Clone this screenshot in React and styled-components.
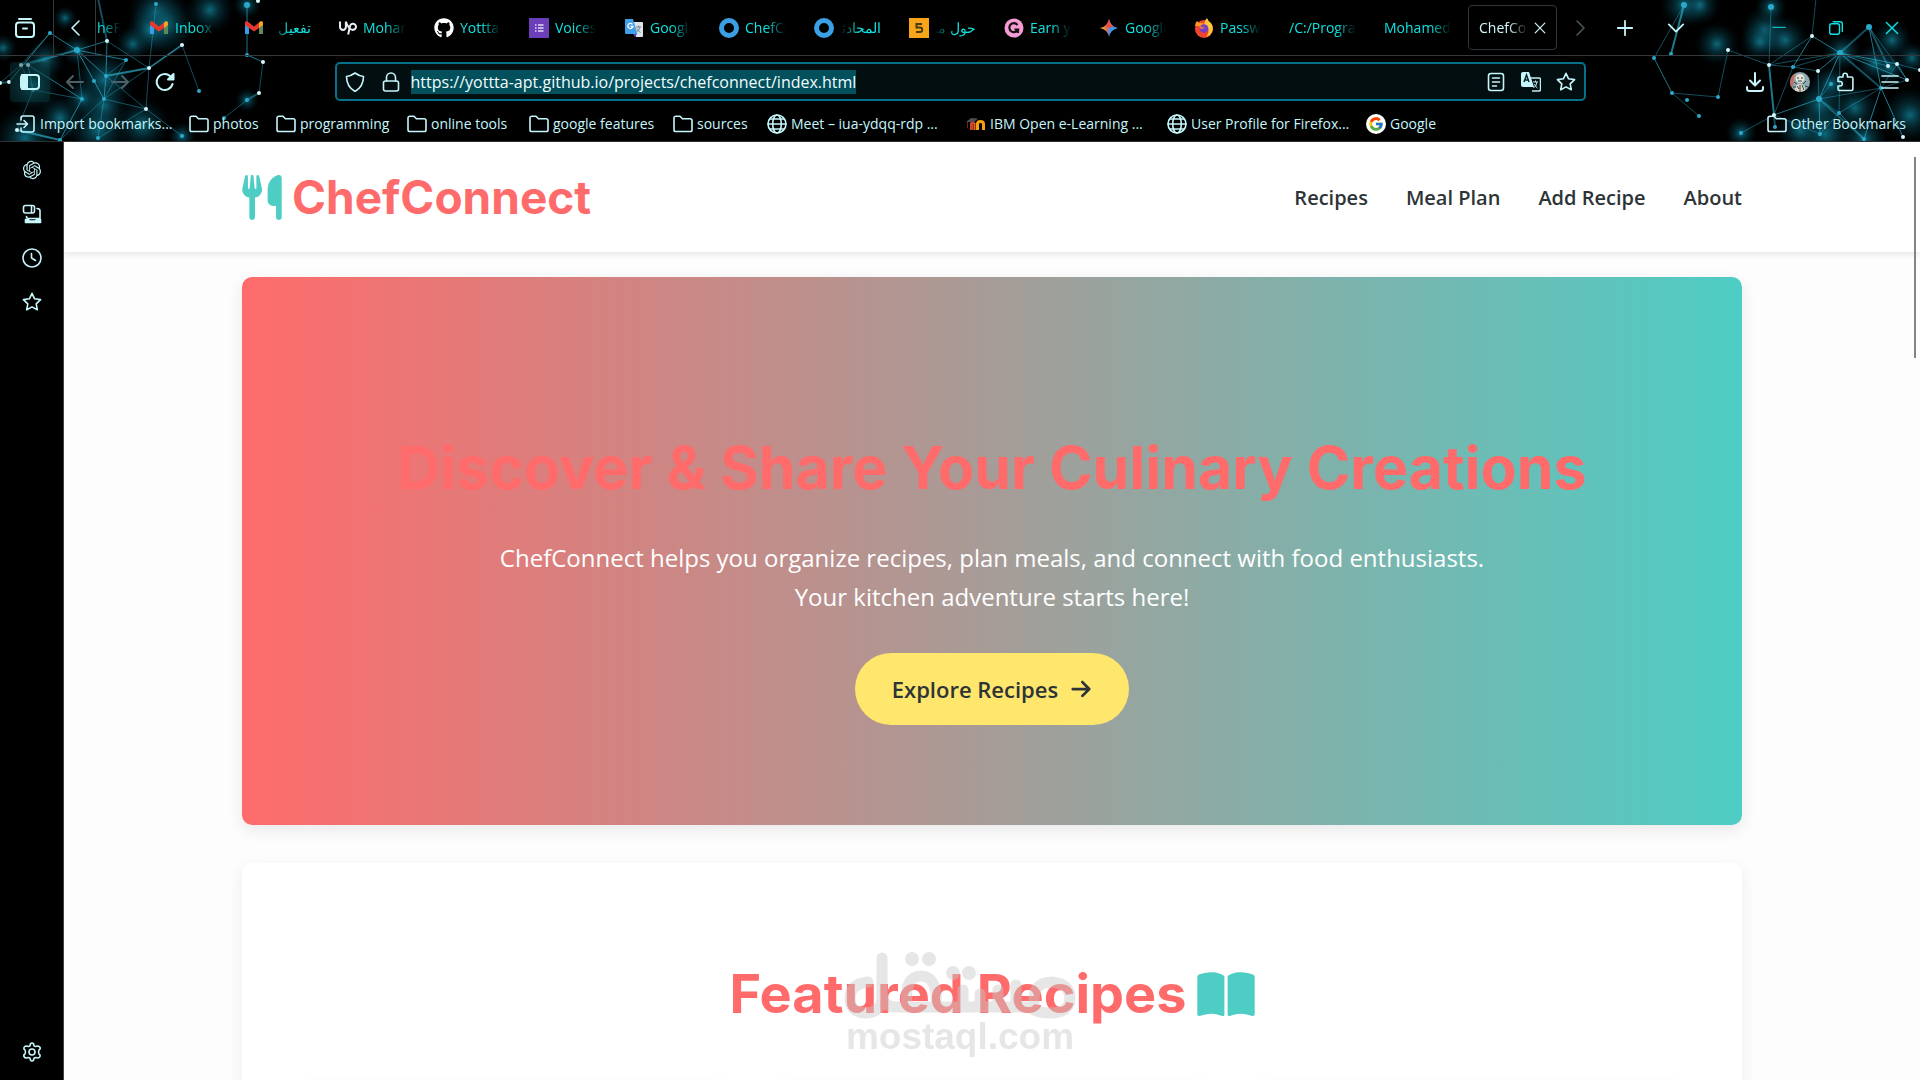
import React from "react";
import styled, { createGlobalStyle, css } from "styled-components";
import { FaUtensils, FaBookOpen, FaArrowRight, FaGithub } from "react-icons/fa6";
import { SiUpwork } from "react-icons/si";
import { FcGoogle } from "react-icons/fc";
import { RiOpenaiFill } from "react-icons/ri";

const GlobalStyle = createGlobalStyle`
  * {
    box-sizing: border-box;
    margin: 0;
    padding: 0;
  }
  body {
    background: #000;
    font-family: "Open Sans", "Noto Sans", sans-serif;
    color: #2d3436;
  }
  button {
    border: 0;
    background: none;
    font: inherit;
    color: inherit;
    cursor: pointer;
  }
  a {
    color: inherit;
    text-decoration: none;
  }
  svg {
    display: block;
    flex: none;
  }
`;

/* ---------- theme drawing behind the toolbars ---------- */

const leftNet = {
  nodes: [
    [77, 50, 3], [107, 41, 1], [182, 45, 1], [149, 68, 1], [126, 60, 2], [50, 33, 2],
    [21, 65, 1], [28, 65, 1], [9, 82, 1], [0, 83, 1], [106, 76, 2], [94, 81, 2],
    [82, 99, 2], [104, 99, 2], [146, 109, 1], [33, 90, 2], [98, 138, 2], [60, 140, 2],
    [182, 136, 2], [199, 91, 2], [247, 55, 2], [263, 62, 1], [259, 93, 1], [247, 100, 2],
    [156, 4, 2], [247, 5, 3], [258, 1, 1], [224, 118, 2], [17, 130, 1], [98, -2, 2],
  ],
  lines: [
    [0, 1], [0, 6], [0, 7], [0, 5], [0, 13], [0, 11], [0, 10], [0, 12], [1, 29], [1, 10],
    [1, 3], [4, 10], [3, 2], [3, 14], [3, 13], [3, 10], [14, 13], [14, 10], [10, 13],
    [2, 19], [22, 21], [20, 21], [22, 23], [23, 27], [25, 20], [24, 3], [5, 6],
    [5, 8], [6, 9], [8, 9], [7, 15], [15, 12], [13, 16], [12, 17], [14, 18], [15, 28],
    [28, 17], [16, 14], [11, 13], [7, 12], [13, 17], [4, 13], [0, 4], [2, 3], [6, 15],
  ],
  glow: [
    [133, 44, 9], [77, 50, 8], [156, 12, 14], [165, 25, 16], [210, 10, 12], [3, 48, 7],
    [104, 80, 16], [104, 106, 12], [82, 99, 9], [60, 118, 12], [25, 138, 16], [98, 130, 16],
    [33, 85, 14], [45, 60, 10], [247, 5, 7], [182, 136, 7], [247, 100, 6], [142, 125, 14],
    [150, 30, 12], [65, 18, 6],
  ],
};

const rightNet = {
  nodes: [
    [1840, 53, 3], [1812, 36, 1], [1728, 50, 1], [1769, 65, 1], [1793, 67, 2], [1869, 27, 3],
    [1888, 66, 1], [1897, 64, 1], [1907, 80, 1], [1881, 88, 2], [1818, 71, 1], [1831, 84, 2],
    [1819, 99, 3], [1839, 113, 2], [1774, 115, 1], [1775, 127, 2], [1864, 139, 2], [1820, 134, 2],
    [1741, 133, 2], [1718, 97, 2], [1671, 54, 2], [1654, 58, 2], [1672, 93, 2], [1699, 116, 2],
    [1684, 5, 3], [1771, 7, 3], [1687, 100, 2], [1903, 137, 1], [1920, 70, 1], [1816, -2, 1],
  ],
  lines: [
    [0, 1], [0, 5], [0, 6], [0, 7], [0, 3], [0, 4], [0, 12], [0, 13], [0, 9], [0, 10],
    [1, 3], [1, 29], [1, 4], [3, 4], [3, 2], [3, 14], [4, 10], [10, 12], [12, 14], [12, 13],
    [12, 9], [12, 17], [14, 15], [9, 13], [9, 27], [9, 8], [9, 7], [8, 7], [7, 28], [5, 6],
    [5, 9], [2, 19], [19, 22], [21, 22], [22, 23], [21, 24], [20, 24], [25, 3], [13, 17],
    [13, 16], [14, 18], [17, 14], [16, 9], [12, 16], [4, 14], [0, 8], [5, 8], [11, 12],
  ],
  glow: [
    [1765, 30, 12], [1785, 40, 12], [1760, 42, 10], [1717, 44, 11], [1842, 52, 10], [1875, 63, 10],
    [1820, 105, 14], [1831, 84, 10], [1855, 108, 12], [1825, 134, 16], [1741, 133, 8], [1684, 5, 12],
    [1771, 7, 8], [1892, 40, 10], [1912, 58, 8], [1864, 139, 12], [1800, 130, 12], [1890, 68, 8],
    [1910, 115, 14], [1700, 5, 10],
  ],
};

const NetSvg = styled.svg`
  position: absolute;
  inset: 0;
  pointer-events: none;
`;

const Net = ({ nodes, lines, glow }) => (
  <g>
    {glow.map(([x, y, r], i) => (
      <circle key={i} cx={x} cy={y} r={r * 2} fill="url(#glow)" />
    ))}
    {lines.map(([a, b], i) => (
      <line
        key={i}
        x1={nodes[a][0]}
        y1={nodes[a][1]}
        x2={nodes[b][0]}
        y2={nodes[b][1]}
        stroke="#2babc8"
        strokeWidth={i % 7 === 1 ? 2 : 1}
        opacity={i % 3 === 0 ? 0.7 : 0.45}
      />
    ))}
    {nodes.map(([x, y, kind], i) => (
      <circle key={i} cx={x} cy={y} r={kind === 3 ? 3 : 2} fill={kind === 1 ? "#d8f6fb" : "#2aa9cc"} />
    ))}
  </g>
);

const Network = () => (
  <NetSvg width="1920" height="141" aria-hidden="true">
    <defs>
      <radialGradient id="glow">
        <stop offset="0" stopColor="#1593ad" stopOpacity="0.7" />
        <stop offset="0.4" stopColor="#0b6478" stopOpacity="0.4" />
        <stop offset="1" stopColor="#06303c" stopOpacity="0" />
      </radialGradient>
    </defs>
    <Net {...leftNet} />
    <Net {...rightNet} />
  </NetSvg>
);

/* ---------- browser icons ---------- */

const Line = ({ size = 20, width = 2, children }) => (
  <svg
    width={size}
    height={size}
    viewBox="0 0 20 20"
    fill="none"
    stroke="currentColor"
    strokeWidth={width}
    strokeLinecap="round"
    strokeLinejoin="round"
    aria-hidden="true"
  >
    {children}
  </svg>
);

const starPath = "M10 1.3l2.6 5.5 6 .8-4.4 4.2 1.1 6L10 14.9l-5.3 2.9 1.1-6L1.4 7.6l6-.8z";

const FolderIcon = () => (
  <Line width={1.6}>
    <path d="M1 15.5V4A1.8 1.8 0 0 1 2.8 2.2H7l2.400 2.500h7.800A1.800 1.800 0 0 1 19 6.500v9.200A1.800 1.800 0 0 1 17.200 17.500H2.800A1.800 1.800 0 0 1 1 15.700z" />
  </Line>
);

const GlobeIcon = () => (
  <Line width={1.6}>
    <circle cx="10" cy="10" r="9" />
    <ellipse cx="10" cy="10" rx="4.300" ry="9" />
    <path d="M1 10h18M3 5h14M3 15h14" />
  </Line>
);

const GmailIcon = () => (
  <svg width="20" height="20" viewBox="0 0 20 20">
    <path d="M1 5v11h4V8z" fill="#3b9de8" />
    <path d="M15 8v8h4V5z" fill="#5f8a5a" />
    <path d="M15 4.500l2-1.500q2 0 2 2v2l-4 3z" fill="#f5a623" />
    <path d="M1 7V5q0-2 2-2l7 5.500L15 4.500V10l-5 3.500L5 10z" fill="#e8372c" />
  </svg>
);

const VoicesIcon = () => (
  <svg width="20" height="20" viewBox="0 0 20 20">
    <path fill="#6b3fb8" d="M0 0h20v20H0z" />
    <path d="M6 7h1.500M6 10h1.500M6 13h1.500M9 7h5.500M9 10h5.500M9 13h5.500" stroke="#e6dcf5" strokeWidth="1.500" />
  </svg>
);

const TranslateIcon = () => (
  <svg width="20" height="20" viewBox="0 0 20 20">
    <path d="M7 4h11q1 0 1 1v13q0 1-1 1h-6z" fill="#dfe3e6" />
    <path d="M12 9h5M14.500 7.500V9M12.500 14q3-2 3.500-5M13 10.500q1 2.500 3.500 4" stroke="#73828c" fill="none" />
    <path d="M1 1h8l4.500 15H2q-1 0-1-1z" fill="#3f9fe9" />
    <path d="M9 16h4l-2 3z" fill="#5b3cc4" />
    <path d="M8.500 6.300A2.600 2.600 0 1 0 9 8.500H6.600" stroke="#fff" strokeWidth="1.300" fill="none" />
  </svg>
);

const RingIcon = () => (
  <svg width="20" height="20" viewBox="0 0 20 20">
    <circle cx="10" cy="10" r="7.500" fill="none" stroke="#3b9fe6" strokeWidth="5" />
  </svg>
);

const FiveIcon = () => (
  <svg width="20" height="20" viewBox="0 0 20 20">
    <path fill="#f9a51a" d="M0 0h20v20H0z" />
    <path d="M13 6H7.500v3.500H11q2.200 0 2.200 2.300T11 14H7" fill="none" stroke="#4a3a12" strokeWidth="2" />
  </svg>
);

const PinkIcon = () => (
  <svg width="20" height="20" viewBox="0 0 20 20">
    <circle cx="10" cy="10" r="9.500" fill="#f69bd6" />
    <path d="M13.500 7A4.500 4.500 0 1 0 14 11.500H10.500M14 10.500V15" fill="none" stroke="#17120f" strokeWidth="2.200" />
  </svg>
);

const GeminiIcon = () => (
  <svg width="20" height="20" viewBox="0 0 20 20">
    <defs>
      <linearGradient id="gem" x1="0" y1="0.500" x2="1" y2="0.500">
        <stop offset="0" stopColor="#f5c518" />
        <stop offset="0.350" stopColor="#e8713f" />
        <stop offset="0.550" stopColor="#3f93ee" />
        <stop offset="1" stopColor="#3fa0f0" />
      </linearGradient>
    </defs>
    <path d="M10 1q1.500 7.500 9 9-7.500 1.500-9 9-1.500-7.500-9-9 7.500-1.500 9-9z" fill="url(#gem)" />
    <path d="M10 1q1 5 4.500 7.500L10 10 6 8.200Q9 6 10 1z" fill="#e8513f" />
  </svg>
);

const FirefoxIcon = () => (
  <svg width="20" height="20" viewBox="0 0 20 20">
    <circle cx="10" cy="11" r="9" fill="#f2452f" />
    <path d="M11 3q1-2 2-3 1 3 4 5 3 4 1 9-2 4-6 5 4-5 2-9-1-3-4-3z" fill="#ffc83a" />
    <path d="M1 8q0-3 2-5l2 2q3-1 5 1L7 8z" fill="#ff9a1f" />
    <circle cx="10" cy="10.500" r="4.300" fill="#7a3fc9" />
    <path d="M5 8q2 0 3 1.500 2 0 3-1-1 2-3 2.500-2 0-3-3z" fill="#ff8a2a" />
  </svg>
);

const MoodleIcon = () => (
  <svg width="20" height="20" viewBox="0 0 20 20">
    <path d="M11.500 16V10q0-2.500 3-2.500T17.500 10v6" fill="none" stroke="#f9a012" strokeWidth="3" />
    <path d="M5.500 16V9.500q1-1.500 3-1.500" fill="none" stroke="#d8431e" strokeWidth="3" />
    <path d="M8.500 16V9" stroke="#f26a1b" strokeWidth="2" />
    <path d="M0 8l5-4 7 .5-4 3.500z" fill="#4c4f53" />
    <path d="M1.500 8v6" stroke="#5e2a22" strokeWidth="1" />
  </svg>
);

const GoogleBadge = styled.span`
  display: flex;
  flex: none;
  padding: 2px;
  border-radius: 50%;
  background: #fff;
`;

/* ---------- browser chrome ---------- */

const Window = styled.div`
  display: flex;
  flex-direction: column;
  height: 100vh;
  overflow: hidden;
  background: #000;
`;

const Chrome = styled.header`
  position: relative;
  flex: none;
  color: #c5f6fb;
  border-bottom: 1px solid #2c3336;
`;

const TabBar = styled.div`
  position: relative;
  display: flex;
  align-items: center;
  height: 56px;
  border-bottom: 1px solid #33393d;
  font-size: 14px;
`;

const IconButton = styled.button`
  display: flex;
  flex: none;
  align-items: center;
  justify-content: center;
  width: ${({ $w }) => $w || 40}px;
  height: 40px;
  border-radius: 4px;
  color: ${({ $color }) => $color || "inherit"};
  background: ${({ $active }) => ($active ? "rgba(10, 60, 64, 0.45)" : "none")};
`;

const ScrollButton = styled(IconButton)`
  height: 55px;
  margin-left: 3px;
  border-left: 1px solid #33393d;
  border-right: 1px solid #33393d;
  border-radius: 0;
`;

const Tabs = styled.div`
  display: flex;
  flex: none;
  gap: 6px;
  overflow: hidden;
`;

const fade = css`
  mask-image: linear-gradient(
    to ${({ $rtl }) => ($rtl ? "left" : "right")},
    #000 calc(100% - 20px),
    transparent
  );
`;

const TabButton = styled.button`
  display: flex;
  align-items: center;
  gap: 6px;
  width: ${({ $first }) => ($first ? 36 : 89)}px;
  height: 45px;
  padding: 0 10px 0 ${({ $first }) => ($first ? 0 : 10)}px;
  border: 1px solid ${({ $active }) => ($active ? "#30373b" : "transparent")};
  border-radius: 4px;
  color: ${({ $active }) => ($active ? "#d4f8fc" : "#0fe3e0")};
  background: ${({ $active }) => ($active ? "#000" : "none")};
  overflow: hidden;
`;

const TabLabel = styled.span`
  flex: 1;
  min-width: 0;
  overflow: hidden;
  white-space: nowrap;
  text-align: start;
  line-height: 24px;
  ${fade}
`;

const Spacer = styled.div`
  flex: 1;
`;

const WindowButtons = styled.div`
  display: flex;
  color: #10e0e6;
`;

const NavBar = styled.div`
  position: relative;
  display: flex;
  align-items: center;
  height: 51px;
  padding: 0 10px;
  justify-content: space-between;
`;

const Group = styled.div`
  display: flex;
  align-items: center;
  gap: ${({ $gap }) => $gap || 0}px;
`;

const UrlBar = styled.label`
  display: flex;
  align-items: center;
  gap: 10px;
  width: 66%;
  max-width: 1251px;
  height: 39px;
  padding: 0 8px;
  border: 2px solid #07708a;
  border-radius: 5px;
  background: #020e0f;
`;

const UrlInput = styled.input`
  field-sizing: content;
  height: 24px;
  border: 0;
  outline: 0;
  color: #f2fdfe;
  background: #02505c;
  font: 16px/24px "Open Sans", sans-serif;
`;

const Avatar = styled.svg`
  border-radius: 50%;
`;

const Bookmarks = styled.nav`
  position: relative;
  display: flex;
  align-items: center;
  height: 34px;
  padding: 0 14px 0 16px;
  font-size: 14px;
`;

const Bookmark = styled.a`
  display: flex;
  flex: none;
  align-items: center;
  gap: 4px;
  width: ${({ $w }) => ($w ? `${$w}px` : "auto")};
  white-space: nowrap;
  line-height: 24px;
`;

const tabs = [
  { label: "heFo", first: true },
  { label: "Inbox", icon: <GmailIcon /> },
  { label: "تفعيل", icon: <GmailIcon />, rtl: true },
  { label: "Moham", icon: <SiUpwork size={18} color="#e8eef0" /> },
  { label: "Yottta-a", icon: <FaGithub size={20} color="#fff" /> },
  { label: "Voices", icon: <VoicesIcon /> },
  { label: "Google", icon: <TranslateIcon /> },
  { label: "ChefCo", icon: <RingIcon /> },
  { label: "المحادثة", icon: <RingIcon />, rtl: true },
  { label: "حول مو", icon: <FiveIcon />, rtl: true },
  { label: "Earn yo", icon: <PinkIcon /> },
  { label: "Google", icon: <GeminiIcon /> },
  { label: "Passwo", icon: <FirefoxIcon /> },
  { label: "/C:/Progra" },
  { label: "Mohamed" },
];

const bookmarks = [
  { label: "photos", icon: <FolderIcon />, w: 87 },
  { label: "programming", icon: <FolderIcon />, w: 131 },
  { label: "online tools", icon: <FolderIcon />, w: 122 },
  { label: "google features", icon: <FolderIcon />, w: 144 },
  { label: "sources", icon: <FolderIcon />, w: 94 },
  { label: "Meet – iua-ydqq-rdp ...", icon: <GlobeIcon />, w: 199 },
  { label: "IBM Open e-Learning ...", icon: <MoodleIcon />, w: 201 },
  { label: "User Profile for Firefox...", icon: <GlobeIcon />, w: 199 },
  {
    label: "Google",
    icon: (
      <GoogleBadge>
        <FcGoogle size={16} />
      </GoogleBadge>
    ),
    w: 80,
  },
];

const BrowserChrome = () => (
  <Chrome>
    <Network />
    <TabBar>
      <IconButton $w={50} aria-label="Firefox View">
        <Line>
          <path d="M4 1h12" />
          <rect x="1" y="4.500" width="18" height="14.500" rx="3" />
          <path d="M8 10.500h4" />
        </Line>
      </IconButton>
      <ScrollButton $w={43} aria-label="Scroll tabs left">
        <Line width={1.6}>
          <path d="M14 3l-7 7 7 7" />
        </Line>
      </ScrollButton>
      <Tabs role="tablist">
        {tabs.map(({ label, icon, rtl, first }, i) => (
          <TabButton key={i} role="tab" $first={first}>
            {icon}
            <TabLabel $rtl={rtl} dir={rtl ? "rtl" : "ltr"}>
              {label}
            </TabLabel>
          </TabButton>
        ))}
        <TabButton role="tab" aria-selected="true" $active>
          <TabLabel>ChefCon</TabLabel>
          <Line size={12}>
            <path d="M2 2l16 16M18 2L2 18" />
          </Line>
        </TabButton>
      </Tabs>
      <IconButton $w={46} $color="#4d5559" aria-label="Scroll tabs right">
        <Line width={1.6}>
          <path d="M7 3l7 7-7 7" />
        </Line>
      </IconButton>
      <IconButton $w={44} aria-label="New tab">
        <Line size={18}>
          <path d="M10 2v16M2 10h16" />
        </Line>
      </IconButton>
      <IconButton $w={57} aria-label="List all tabs">
        <Line size={18}>
          <path d="M2 6l8 8 8-8" />
        </Line>
      </IconButton>
      <Spacer />
      <WindowButtons>
        <IconButton $w={57} aria-label="Minimize">
          <Line size={14} width={1.4}>
            <path d="M1 9h18" />
          </Line>
        </IconButton>
        <IconButton $w={57} aria-label="Restore">
          <Line size={14} width={2}>
            <rect x="1" y="4" width="14" height="15" rx="3" />
            <path d="M6 1h10q3 0 3 3v11" />
          </Line>
        </IconButton>
        <IconButton $w={56} aria-label="Close">
          <Line size={14}>
            <path d="M2 2l16 16M18 2L2 18" />
          </Line>
        </IconButton>
      </WindowButtons>
    </TabBar>

    <NavBar>
      <Group $gap={5}>
        <IconButton $active aria-label="Sidebars">
          <Line>
            <rect x="1" y="3" width="18" height="14" rx="3" />
            <path d="M2 3h5v14H2z" fill="currentColor" />
          </Line>
        </IconButton>
        <IconButton $color="#4d6068" aria-label="Back">
          <Line>
            <path d="M18 10H2M8 4l-6 6 6 6" />
          </Line>
        </IconButton>
        <IconButton $color="#4d6068" aria-label="Forward">
          <Line>
            <path d="M2 10h16M12 4l6 6-6 6" />
          </Line>
        </IconButton>
        <IconButton aria-label="Reload">
          <Line>
            <path d="M17.500 12A8 8 0 1 1 15 4l2.500 2.500" />
            <path d="M18.500 2v5.500H13z" fill="currentColor" />
          </Line>
        </IconButton>
      </Group>
      <UrlBar>
        <Group $gap={16}>
          <Line width={1.6}>
            <path d="M10 1q4 3 8.500 3.500 0 10-8.500 15-8.500-5-8.500-15Q6 4 10 1z" />
          </Line>
          <Line width={1.6}>
            <rect x="2.500" y="9" width="15" height="10" rx="2" />
            <path d="M5.500 9V5.500a4.500 4.500 0 0 1 9 0V9" />
          </Line>
        </Group>
        <UrlInput
          aria-label="Address"
          spellCheck={false}
          defaultValue="https://yottta-apt.github.io/projects/chefconnect/index.html"
        />
        <Spacer />
        <Group $gap={15}>
          <Line width={1.6}>
            <rect x="2.500" y="1.500" width="15" height="17" rx="2.500" />
            <path d="M6.500 6h7M6.500 10h7M6.500 14h4" />
          </Line>
          <svg width="20" height="20" viewBox="0 0 20 20" aria-hidden="true">
            <path d="M9 6h9q1.500 0 1.500 1.500v10q0 1.500-1.500 1.500h-7" fill="none" stroke="#bfeef5" strokeWidth="1.500" />
            <path d="M0 2q0-2 2-2h6l5 15H2q-2 0-2-2z" fill="#c5f6fb" />
            <path d="M3 10l2.500-7L8 10M4 8h3" fill="none" stroke="#0a2326" strokeWidth="1.500" />
            <path d="M12 10h5M14.500 8.500V10M12.500 16q3-2 3.500-6M13.500 12q1 3 3 4" fill="none" stroke="#bfeef5" />
          </svg>
          <Line width={1.6}>
            <path d={starPath} />
          </Line>
        </Group>
      </UrlBar>
      <Group $gap={5}>
        <IconButton aria-label="Downloads">
          <Line>
            <path d="M10 1v12M5 8.500l5 5 5-5M2 15v1.500Q2 19 4.500 19h11q2.500 0 2.500-2.500V15" />
          </Line>
        </IconButton>
        <IconButton aria-label="Account">
          <Avatar width="20" height="20" viewBox="0 0 20 20">
            <path fill="#8fa9b0" d="M0 0h20v20H0z" />
            <path d="M0 5l5-5-2 14-3 2z" fill="#c96a60" />
            <circle cx="10" cy="6.500" r="4.500" fill="#e6e2d4" />
            <path d="M5 20q-1-8 5-8t5 8z" fill="#e3d6c6" />
            <path d="M7 6h2M11 6h2M8 9h4M7 14l2 3M12 13l2 5M10 13v7M4 10l3 2M16 9l-3 3M3 15h3M15 14l3 1" stroke="#26454f" />
          </Avatar>
        </IconButton>
        <IconButton aria-label="Extensions">
          <Line width={1.6}>
            <path d="M3 6.500q0-1.500 1.500-1.500H8V3.500a2.200 2.200 0 0 1 4.400 0V5h4q1.500 0 1.500 1.500V17q0 1.500-1.500 1.500h-12Q3 18.500 3 17v-3h2a2 2 0 0 0 0-4.500H3z" />
          </Line>
        </IconButton>
        <IconButton aria-label="Menu">
          <Line width={1.6}>
            <path d="M2 4h16M2 10h16M2 16h16" />
          </Line>
        </IconButton>
      </Group>
    </NavBar>

    <Bookmarks aria-label="Bookmarks">
      <Bookmark href="#import" $w={173}>
        <Line width={1.6}>
          <path d="M5 6V4q0-2 2-2h9q2 0 2 2v12q0 2-2 2H7q-2 0-2-2v-2M1 10h10M8 6.500l3.500 3.500L8 13.500" />
        </Line>
        Import bookmarks...
      </Bookmark>
      {bookmarks.map(({ label, icon, w }) => (
        <Bookmark key={label} href="#bookmark" $w={w}>
          {icon}
          {label}
        </Bookmark>
      ))}
      <Spacer />
      <Bookmark href="#other">
        <FolderIcon />
        Other Bookmarks
      </Bookmark>
    </Bookmarks>
  </Chrome>
);

/* ---------- side strip ---------- */

const Body = styled.div`
  display: flex;
  flex: 1;
  min-height: 0;
`;

const SideBar = styled.aside`
  display: flex;
  flex: none;
  flex-direction: column;
  align-items: center;
  gap: 4px;
  width: 64px;
  padding: 8px 0;
  border-right: 1px solid #3b4246;
  color: #c5f6fb;
`;

const BrowserSide = () => (
  <SideBar>
    <IconButton aria-label="AI chatbot">
      <RiOpenaiFill size={22} />
    </IconButton>
    <IconButton aria-label="Synced tabs">
      <Line width={1.6}>
        <rect x="1.500" y="1.500" width="11" height="7.500" rx="2" />
        <path d="M9.500 2v6.500M15 4.500q3 0 3 2.500v7.500H6.500q-2 0-2-2" />
        <path d="M3.500 15.500h3q.5 1.500 2 1.500h4q1.500 0 2-1.500h4v3h-15z" fill="currentColor" />
      </Line>
    </IconButton>
    <IconButton aria-label="History">
      <Line width={1.6}>
        <circle cx="10" cy="10" r="9" />
        <path d="M9.500 5.500V10l4 2.500" />
      </Line>
    </IconButton>
    <IconButton aria-label="Bookmarks sidebar">
      <Line width={1.6}>
        <path d={starPath} />
      </Line>
    </IconButton>
    <Spacer />
    <IconButton aria-label="Customize sidebar">
      <Line width={1.6}>
        <circle cx="10" cy="10" r="3" />
        <path d="M8.300 3q0-2 1.700-2t1.700 2q.3 1.500 2 1.500l2-.5q1.500 0 2.300 1.500T17 8q-1 2 0 4 1.700 1 1 2.500T15.700 16l-2-.5q-1.700 0-2 1.500 0 2-1.700 2t-1.700-2q-.3-1.500-2-1.500l-2 .5Q2.800 16 2 14.500T3 12q1-2 0-4-1.700-1-1-2.500T4.300 4l2 .5q1.700 0 2-1.500z" />
      </Line>
    </IconButton>
  </SideBar>
);

/* ---------- ChefConnect page ---------- */

const Page = styled.div`
  position: relative;
  flex: 1;
  min-width: 0;
  overflow: hidden;
  background: #fdfdfd;
`;

const ScrollThumb = styled.div`
  position: absolute;
  top: 15px;
  right: 4px;
  width: 2px;
  height: 201px;
  background: #85857f;
`;

const Container = styled.div`
  width: calc(100% - 50px);
  max-width: 1500px;
  margin: 0 auto;
`;

const SiteHeader = styled.header`
  background: #fff;
  box-shadow: 0 2px 6px rgba(45, 52, 54, 0.12);
`;

const HeaderInner = styled(Container)`
  display: flex;
  align-items: center;
  justify-content: space-between;
  height: 110px;
`;

const Logo = styled.a`
  display: flex;
  align-items: center;
  gap: 10px;
  color: #ff6b6b;
  font: 700 46px/72px Inter, sans-serif;

  svg {
    width: 40px;
    height: 45px;
    color: #4ecdc4;
  }
`;

const Menu = styled.nav`
  display: flex;
  gap: 38px;
  padding-top: 2px;
  font-size: 20px;
  font-weight: 600;
  line-height: 32px;
`;

const Hero = styled.section`
  margin: 25px 0 38px;
  padding: 146px 40px 100px;
  border-radius: 10px;
  background: linear-gradient(to right, #ff6b6b, #4ecdc4);
  box-shadow: 0 5px 15px rgba(45, 52, 54, 0.1);
  text-align: center;
`;

const HeroTitle = styled.h1`
  margin-bottom: 25px;
  color: #ff6b6b;
  font: 700 59px/90px Inter, sans-serif;
`;

const HeroText = styled.p`
  max-width: 1000px;
  margin: 0 auto 37px;
  color: #fff;
  font-size: 24px;
  line-height: 39px;
`;

const HeroButton = styled.a`
  display: inline-flex;
  align-items: center;
  gap: 12px;
  height: 72px;
  padding: 0 37px;
  border-radius: 36px;
  background: #ffe66d;
  color: #2d3436;
  font-size: 22px;
  font-weight: 600;
  vertical-align: top;
`;

const Featured = styled.section`
  padding: 91px 50px 50px;
  border-radius: 10px;
  background: #fff;
  box-shadow: 0 5px 15px rgba(45, 52, 54, 0.08);
`;

const SectionTitle = styled.h2`
  display: flex;
  align-items: center;
  justify-content: center;
  gap: 10px;
  margin-bottom: 50px;
  color: #ff6b6b;
  font: 700 54px/80px Inter, sans-serif;

  svg {
    width: 58px;
    height: 51px;
    color: #4ecdc4;
  }
`;

const Cards = styled.div`
  display: grid;
  grid-template-columns: repeat(3, 1fr);
  gap: 38px;
`;

const Card = styled.article`
  height: 400px;
  border-radius: 10px;
  background: #fff;
  box-shadow: 0 5px 15px rgba(45, 52, 54, 0.08);
`;

const Watermark = styled.div`
  position: absolute;
  top: 810px;
  left: calc(50% - 32px);
  transform: translateX(-50%);
  width: 232px;
  color: #c8c8c8;
  opacity: 0.45;
  text-align: center;
  font: 700 37px/34px "Liberation Sans", sans-serif;
`;

const WatermarkLogo = styled.svg`
  width: 232px;
  height: 68px;
`;

const links = ["Recipes", "Meal Plan", "Add Recipe", "About"];

const ChefConnect = () => (
  <Page>
    <SiteHeader>
      <HeaderInner>
        <Logo href="#home">
          <FaUtensils />
          ChefConnect
        </Logo>
        <Menu>
          {links.map((link) => (
            <a key={link} href="#section">
              {link}
            </a>
          ))}
        </Menu>
      </HeaderInner>
    </SiteHeader>
    <Container as="main">
      <Hero>
        <HeroTitle>Discover &amp; Share Your Culinary Creations</HeroTitle>
        <HeroText>
          ChefConnect helps you organize recipes, plan meals, and connect with food enthusiasts. Your kitchen
          adventure starts here!
        </HeroText>
        <HeroButton href="#recipes">
          Explore Recipes
          <FaArrowRight size={22} />
        </HeroButton>
      </Hero>
      <Featured>
        <SectionTitle>
          Featured Recipes
          <FaBookOpen />
        </SectionTitle>
        <Cards>
          <Card />
          <Card />
          <Card />
        </Cards>
      </Featured>
    </Container>
    <Watermark>
      <WatermarkLogo viewBox="0 0 232 68" fill="none" stroke="currentColor" strokeWidth="11" strokeLinecap="round">
        <path d="M24 30Q6 32 6 46q0 15 16 15 16-1 16-15V6M38 42q1 13 14 13h134q4 6 22 6 18-1 18-15T208 30q-18 0-18 18v5M63 54q-3-30 14-30t15 30M119 53V38M136 53V42M154 53V38M172 53V33" />
        <g fill="currentColor" stroke="none">
          <circle cx="68" cy="7" r="7" />
          <circle cx="85" cy="7" r="7" />
          <circle cx="109" cy="21" r="7" />
          <circle cx="125" cy="21" r="7" />
        </g>
      </WatermarkLogo>
      mostaql.com
    </Watermark>
    <ScrollThumb />
  </Page>
);

const App = () => {
  return (
    <Window>
      <GlobalStyle />
      <BrowserChrome />
      <Body>
        <BrowserSide />
        <ChefConnect />
      </Body>
    </Window>
  );
};

export default App;
